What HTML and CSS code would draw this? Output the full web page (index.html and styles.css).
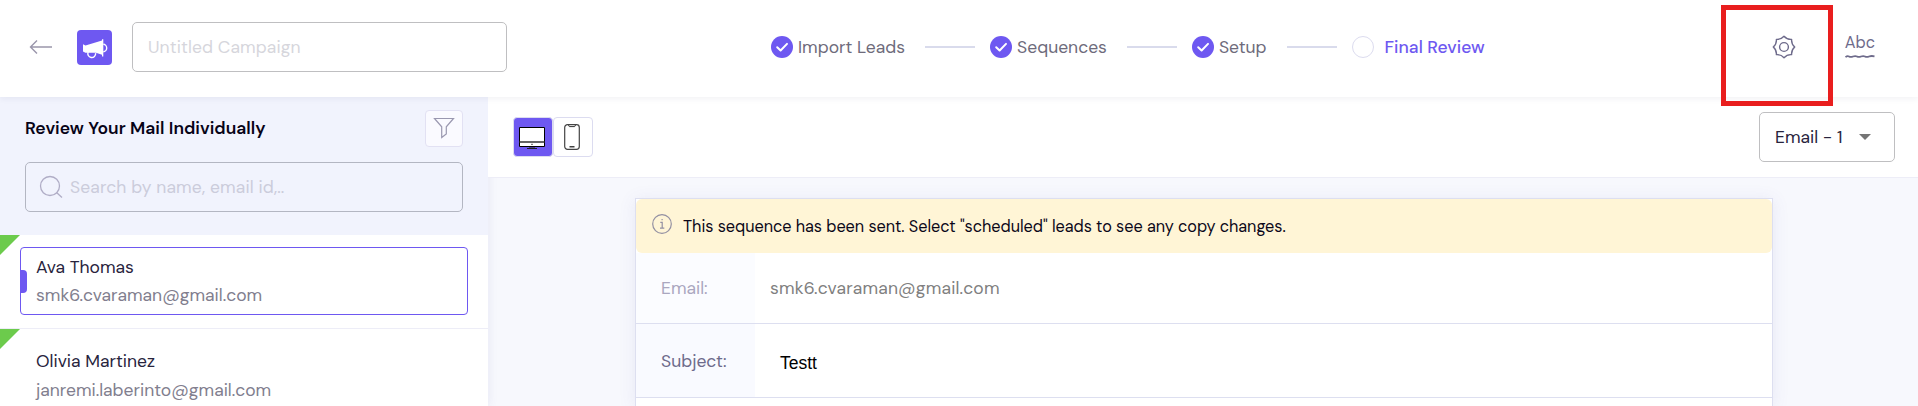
FILE: index.html
```html
<!DOCTYPE html>
<html lang="en">
<head>
    <meta charset="UTF-8">
    <meta name="viewport" content="width=device-width, initial-scale=1.0">
    <title>Untitled Campaign - Final Review</title>
    <link rel="stylesheet" href="styles.css">
</head>
<body>

    <header class="header">
        <svg class="back" width="24" height="16" viewBox="0 0 24 16"><path d="M23 8H2M8 1.5L1.5 8L8 14.5"/></svg>
        <div class="logo">
            <svg width="35" height="35" viewBox="0 0 35 35">
                <path d="M6 14.2L8.5 15.5L25 10.5V9.2H26.3V26.6H25V24.8L19 22.8H8.5L6 21.5Z" fill="#fff"/>
                <path d="M26.3 14.3A3.4 3.7 0 0 1 26.3 21.7M11.2 22A3.9 3.9 0 1 0 18.6 23.2" fill="none" stroke="#fff" stroke-width="1.4"/>
            </svg>
        </div>
        <input class="campaign-name" type="text" placeholder="Untitled Campaign">

        <div class="steps">
            <div class="step"><svg class="check" width="22" height="22" viewBox="0 0 22 22"><circle cx="11" cy="11" r="11"/><path d="M6.2 11.2L9.6 14.5L16 7.9"/></svg><span>Import Leads</span></div>
            <div class="line"></div>
            <div class="step"><svg class="check" width="22" height="22" viewBox="0 0 22 22"><circle cx="11" cy="11" r="11"/><path d="M6.2 11.2L9.6 14.5L16 7.9"/></svg><span>Sequences</span></div>
            <div class="line"></div>
            <div class="step"><svg class="check" width="22" height="22" viewBox="0 0 22 22"><circle cx="11" cy="11" r="11"/><path d="M6.2 11.2L9.6 14.5L16 7.9"/></svg><span>Setup</span></div>
            <div class="line"></div>
            <div class="step active"><i class="dot"></i><span>Final Review</span></div>
        </div>

        <div class="tools">
            <svg class="gear" width="24" height="24" viewBox="0 0 24 24"><circle cx="12" cy="12" r="4.4"/><path d="M12 1.3Q15 4.7 19.6 4.4Q19.3 9 22.7 12Q19.3 15 19.6 19.6Q15 19.3 12 22.7Q9 19.3 4.4 19.6Q4.7 15 1.3 12Q4.7 9 4.4 4.4Q9 4.7 12 1.3Z"/></svg>
            <div class="spell">
                <span>Abc</span>
                <svg width="30" height="5" viewBox="0 0 30 5"><path d="M.5 3.2Q2.3 1.6 4 2.5T8 2.5T12 2.5T16 2.5T20 2.5T24 2.5T29.5 2.3"/></svg>
            </div>
        </div>
        <div class="highlight"></div>
    </header>

    <div class="content">
        <aside class="sidebar">
            <div class="filters">
                <div class="filters-top">
                    <h1>Review Your Mail Individually</h1>
                    <button class="filter-btn"><svg width="22" height="22" viewBox="0 0 22 22"><path d="M1.5 1.5H20.5L13.3 9.8V17L8.7 20.5V9.8Z"/></svg></button>
                </div>
                <label class="search">
                    <svg width="24" height="24" viewBox="0 0 24 24"><circle cx="11" cy="11" r="9.5"/><path d="M17.5 17.5L23 22.5"/></svg>
                    <input type="text" placeholder="Search by name, email id,..">
                </label>
            </div>
            <div class="lead">
                <div class="lead-card selected">
                    <div class="name">Ava Thomas</div>
                    <div class="mail">smk6.cvaraman@gmail.com</div>
                </div>
            </div>
            <div class="lead">
                <div class="lead-card">
                    <div class="name">Olivia Martinez</div>
                    <div class="mail">janremi.laberinto@gmail.com</div>
                </div>
            </div>
        </aside>

        <main class="main">
            <div class="toolbar">
                <div class="devices">
                    <button class="device on"><svg width="26" height="23" viewBox="0 0 26 23"><path d="M.5 1.5H25.5V20.5H.5Z" fill="#fff" stroke="#000"/><path d="M0 16H26" stroke="#222" stroke-width="1.4"/><path d="M12.3 18.3H13.7M10 22H16M8 22.5H18" stroke="#222"/></svg></button>
                    <button class="device"><svg width="16" height="26" viewBox="0 0 16 26"><rect x=".7" y=".7" width="14.6" height="24.6" rx="2.8" fill="#fff" stroke="#444" stroke-width="1.2"/><path d="M4.5 1L5.3 2.6H10.7L11.5 1" fill="none" stroke="#333"/><path d="M5.5 22.8H10.5" stroke="#111" stroke-width="1.2"/></svg></button>
                </div>
                <div class="select"><span>Email - 1</span><i></i></div>
            </div>
            <div class="preview">
                <div class="notice">
                    <svg width="20" height="20" viewBox="0 0 20 20"><circle cx="10" cy="10" r="9.3"/><path d="M8.3 8.3H10.2V14M8 14.2H12.3M9.5 5.6H10.7"/></svg>
                    <span>This sequence has been sent. Select "scheduled" leads to see any copy changes.</span>
                </div>
                <div class="row email">
                    <div class="label">Email:</div>
                    <div class="value">smk6.cvaraman@gmail.com</div>
                </div>
                <div class="row subject">
                    <div class="label">Subject:</div>
                    <div class="value">Testt</div>
                </div>
            </div>
        </main>
    </div>

</body>
</html>
```
FILE: styles.css
```css
* { margin: 0; padding: 0; box-sizing: border-box; }
body { background: #f7f8fd; color: #28243d; font-family: "DM Sans", Inter, sans-serif; font-size: 17.5px; height: 406px; overflow: hidden; }
button, input { font-family: inherit; }
svg { display: block; flex: none; }

/* top bar */
.header { position: relative; z-index: 2; height: 97px; padding: 0 43px 0 29px; background: #fff; box-shadow: 0 2px 6px rgba(40, 40, 80, 0.06); display: flex; align-items: center; }
.header > * { margin-top: -3px; }
.back { fill: none; stroke: #9a96ab; stroke-width: 1.4; margin-right: 24px; }
.logo { width: 35px; height: 35px; background: #6e58f1; border-radius: 4px; margin-right: 20px; }
.campaign-name { width: 375px; height: 50px; border: 1px solid #bfbfc1; border-radius: 5px; padding: 0 15px; font-size: 17.5px; letter-spacing: 0.1px; background: #fff; }
input::placeholder { color: #d6d6dc; opacity: 1; }
.steps { display: flex; align-items: center; margin-left: 264px; color: #6e6b7b; }
.step { display: flex; align-items: center; gap: 5px; }
.check circle { fill: #6e58f1; }
.check path { fill: none; stroke: #fff; stroke-width: 2; stroke-linecap: round; stroke-linejoin: round; }
.line { width: 50px; height: 2px; background: #d9dbec; margin: 0 15px 0 20px; }
.active { color: #6e58f1; font-weight: 500; gap: 11px; letter-spacing: 0.05px; }
.dot { width: 22px; height: 22px; border: 1px solid #dcdcef; border-radius: 50%; }
.tools { display: flex; align-items: center; gap: 49px; margin-left: auto; }
.gear { fill: none; stroke: #6e6b8b; stroke-width: 1.4; stroke-linejoin: round; }
.spell { color: #6e6b8b; font-size: 16.25px; line-height: 20px; padding-bottom: 3px; }
.spell svg { margin-top: 1px; }
.spell path { fill: none; stroke: #6e6b8b; stroke-width: 1.8; }
.highlight { position: absolute; left: 1721px; top: 8px; width: 112px; height: 101px; border: 5px solid #e91e1e; }

.content { display: flex; height: 309px; overflow: hidden; }

/* leads list */
.sidebar { width: 488px; background: #fff; box-shadow: 2px 0 8px rgba(90, 90, 160, 0.08); }
.filters { height: 138px; background: #f1f3fd; padding: 13px 25px 0; }
.filters-top { display: flex; align-items: center; justify-content: space-between; height: 37px; margin-bottom: 15px; }
h1 { font-size: 17.5px; font-weight: 600; color: #070317; margin-top: -2px; letter-spacing: 0.03px; }
.filter-btn { width: 38px; height: 37px; background: #fafaff; border: 1px solid #e2e1f3; border-radius: 4px; display: flex; justify-content: center; padding-top: 6px; }
.filter-btn path { fill: none; stroke: #9a98b0; stroke-width: 1.2; }
.search { display: flex; align-items: center; height: 50px; border: 1px solid #b3b6c2; border-radius: 5px; padding-left: 13px; gap: 7px; }
.search svg { fill: none; stroke: #b0adc6; stroke-width: 1.3; }
.search input { border: 0; background: none; width: 300px; font-size: 17.5px; letter-spacing: 0.12px; }
.search input::placeholder { color: #cbccdb; }
.lead { position: relative; height: 94px; border-bottom: 1px solid #ededf7; padding: 12px 20px; }
.lead:last-child { height: 77px; border-bottom: 0; padding-bottom: 0; }
.lead::before { content: ""; position: absolute; left: 0; top: 0; border-top: 20px solid #6ccb4c; border-right: 20px solid transparent; }
.lead-card { position: relative; height: 68px; border: 1px solid transparent; border-radius: 4px; padding: 5px 15px; line-height: 28px; }
.lead:last-child .lead-card { height: 65px; line-height: 28.5px; }
.selected { border-color: #6e58f1; }
.selected::before { content: ""; position: absolute; left: 0; top: 22px; width: 6px; height: 23px; background: #6e58f1; border-radius: 0 4px 4px 0; }
.mail { color: #817e8e; }

/* mail preview */
.main { flex: 1; display: flex; flex-direction: column; align-items: center; }
.toolbar { align-self: stretch; flex: none; height: 81px; background: #fff; border-bottom: 1px solid #ededf7; display: flex; justify-content: space-between; padding: 15px 23px 0 25px; }
.devices { display: flex; margin-top: 5px; }
.device { width: 40px; height: 40px; background: #fff; border: 1px solid #dcdcf0; border-radius: 4px; display: flex; align-items: center; justify-content: center; padding-right: 2px; }
.on { background: #6e58f1; }
.select { width: 136px; height: 50px; border: 1px solid #bfbfc1; border-radius: 5px; display: flex; align-items: center; justify-content: space-between; padding: 0 23px 0 15px; }
.select i { border: 6px solid transparent; border-top-color: #757575; border-bottom: 0; }
.preview { flex: 1; width: 1138px; margin-top: 20px; margin-left: 2px; background: #fff; border: 1px solid #dddff0; border-bottom: 0; box-shadow: 0 2px 16px rgba(90, 90, 180, 0.1); }
.notice { height: 54px; background: #fff5d6; border-radius: 6px; display: flex; align-items: center; gap: 11px; padding: 0 16px 4px; font-size: 16.25px; letter-spacing: -0.03px; color: #0b0719; }
.notice svg { fill: none; stroke: #9390a2; stroke-width: 1.2; }
.notice span { position: relative; top: 2px; }
.row { display: flex; border-bottom: 1px solid #dddff0; }
.label { width: 119px; padding-left: 25px; background: #f9faff; color: #6e6b8b; display: flex; align-items: center; }
.value { padding-left: 15px; display: flex; align-items: center; color: #808080; letter-spacing: 0.15px; }
.email { height: 71px; }
.email .label { color: #aaa7bf; background: #fbfcff; }
.subject { height: 74px; }
.subject .value { font-family: "Liberation Sans", Arial, sans-serif; letter-spacing: 0; color: #000; padding: 6px 0 0 25px; }
```
